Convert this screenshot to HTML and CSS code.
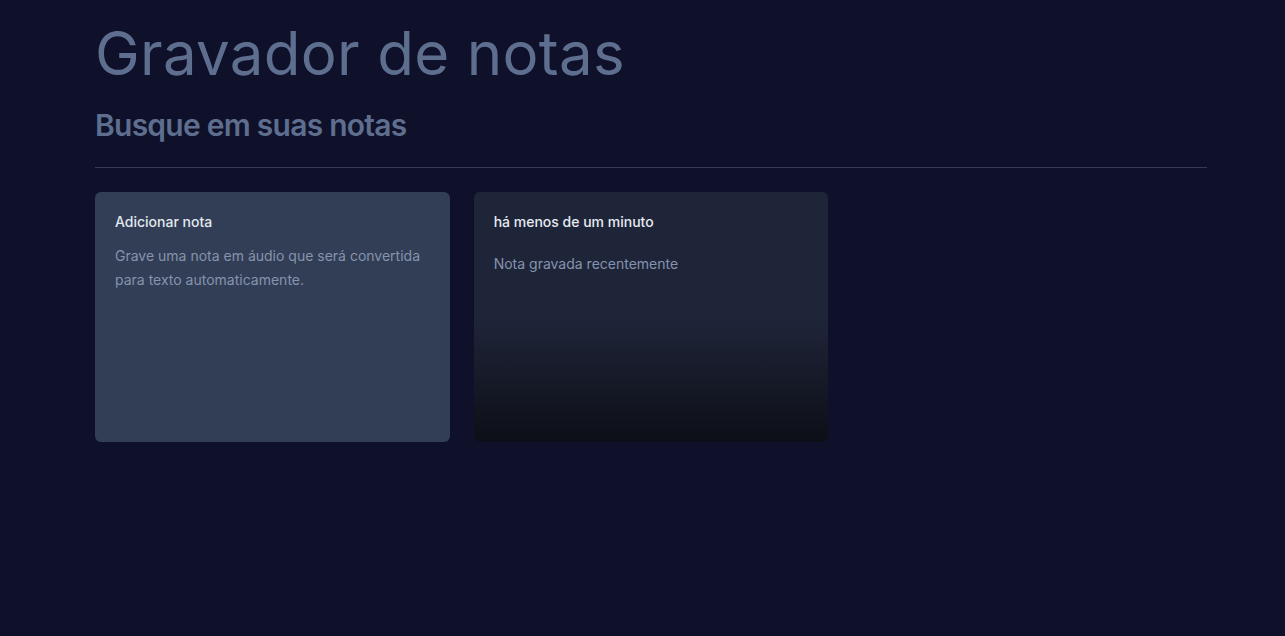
FILE: index.html
```html
<!DOCTYPE html>
<html lang="pt-BR">
<head>
<meta charset="utf-8">
<title>Gravador de notas</title>
<link rel="stylesheet" href="styles.css">
</head>
<body>
<div class="page">
  <h1 class="logo">Gravador de notas</h1>
  <form class="search">
    <input class="search-input" type="text" placeholder="Busque em suas notas">
  </form>
  <div class="divider"></div>
  <div class="grid">
    <button class="card card-add" type="button">
      <span class="card-title">Adicionar nota</span>
      <p class="card-text">Grave uma nota em áudio que será convertida para texto automaticamente.</p>
    </button>
    <button class="card card-note" type="button">
      <span class="card-title note-date">há menos de um minuto</span>
      <p class="card-text note-text">Nota gravada recentemente</p>
      <div class="fade"></div>
    </button>
  </div>
</div>
</body>
</html>
```

FILE: styles.css
```css
* { box-sizing: border-box; }
html, body { margin: 0; padding: 0; }
body {
  background: #0f1029;
  font-family: Inter, "Noto Sans", sans-serif;
  color: #cbd5e1;
  min-height: 636px;
}
.page {
  width: 1112px;
  margin-left: 95px;
  padding-top: 23px;
  display: flex;
  flex-direction: column;
  gap: 24px;
}
.logo {
  margin: 0;
  font-size: 60px;
  line-height: 60px;
  font-weight: 400;
  color: #5e6e8e;
  letter-spacing: 0.3px;
}
.search { margin: 0; }
.search-input {
  display: block;
  width: 100%;
  background: transparent;
  border: 0;
  outline: none;
  padding: 0;
  font-family: Inter, "Noto Sans", sans-serif;
  font-size: 30px;
  line-height: 36px;
  height: 36px;
  font-weight: 600;
  letter-spacing: -0.75px;
  color: #5e6e8e;
}
.search-input::placeholder { color: #5e6e8e; opacity: 1; }
.divider { height: 1px; background: #363a57; }
.grid {
  display: grid;
  grid-template-columns: repeat(3, 1fr);
  grid-auto-rows: 250px;
  gap: 24px;
}
.card {
  position: relative;
  overflow: hidden;
  border: 0;
  border-radius: 6px;
  padding: 20px;
  display: flex;
  flex-direction: column;
  gap: 12px;
  text-align: left;
  font-family: Inter, "Noto Sans", sans-serif;
  cursor: pointer;
}
.card-add { background: #323e55; }
.card-note { background: #1f2539; }
.card-title {
  font-size: 14px;
  line-height: 20px;
  font-weight: 500;
  color: #e2e8f0;
}
.card-text {
  margin: 0;
  font-size: 14px;
  line-height: 24px;
  color: #8593ad;
}
.note-date { color: #e6ebf2; }
.note-text { margin-top: 8px; }
.fade {
  position: absolute;
  left: 0; right: 0; bottom: 0;
  height: 50%;
  background: linear-gradient(to top, rgba(0,0,0,0.6), rgba(0,0,0,0));
  pointer-events: none;
}
```
